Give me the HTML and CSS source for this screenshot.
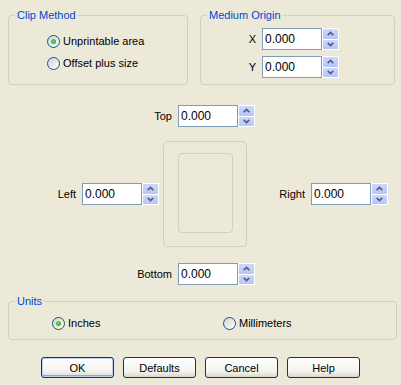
FILE: index.html
```html
<!DOCTYPE html>
<html lang="en">
<head>
    <meta charset="UTF-8">
    <title>Page Setup</title>
    <link rel="stylesheet" href="styles.css">
</head>
<body>
    <div class="dialog">
        <div class="top-row">
            <fieldset class="group clip">
                <legend>Clip Method</legend>
                <div class="group-body">
                    <label class="radio-row"><span class="radio checked"></span>Unprintable area</label>
                    <label class="radio-row"><span class="radio"></span>Offset plus size</label>
                </div>
            </fieldset>
            <fieldset class="group origin">
                <legend>Medium Origin</legend>
                <div class="group-body">
                    <div class="field">
                        <span class="field-label">X</span>
                        <input type="text" value="0.000">
                        <span class="spin">
                            <span class="spin-btn"><svg width="7" height="5" viewBox="0 0 7 5"><path d="M0.7 4.2 L3.5 1.4 L6.3 4.2"/></svg></span>
                            <span class="spin-btn"><svg width="7" height="5" viewBox="0 0 7 5"><path d="M0.7 0.8 L3.5 3.6 L6.3 0.8"/></svg></span>
                        </span>
                    </div>
                    <div class="field">
                        <span class="field-label">Y</span>
                        <input type="text" value="0.000">
                        <span class="spin">
                            <span class="spin-btn"><svg width="7" height="5" viewBox="0 0 7 5"><path d="M0.7 4.2 L3.5 1.4 L6.3 4.2"/></svg></span>
                            <span class="spin-btn"><svg width="7" height="5" viewBox="0 0 7 5"><path d="M0.7 0.8 L3.5 3.6 L6.3 0.8"/></svg></span>
                        </span>
                    </div>
                </div>
            </fieldset>
        </div>

        <div class="margins">
            <div class="field vrow">
                <span class="field-label">Top</span>
                <input type="text" value="0.000">
                <span class="spin">
                    <span class="spin-btn"><svg width="7" height="5" viewBox="0 0 7 5"><path d="M0.7 4.2 L3.5 1.4 L6.3 4.2"/></svg></span>
                    <span class="spin-btn"><svg width="7" height="5" viewBox="0 0 7 5"><path d="M0.7 0.8 L3.5 3.6 L6.3 0.8"/></svg></span>
                </span>
            </div>
            <div class="hrow">
                <div class="field side-left">
                    <span class="field-label">Left</span>
                    <input type="text" value="0.000">
                    <span class="spin">
                        <span class="spin-btn"><svg width="7" height="5" viewBox="0 0 7 5"><path d="M0.7 4.2 L3.5 1.4 L6.3 4.2"/></svg></span>
                        <span class="spin-btn"><svg width="7" height="5" viewBox="0 0 7 5"><path d="M0.7 0.8 L3.5 3.6 L6.3 0.8"/></svg></span>
                    </span>
                </div>
                <div class="page"><div class="sheet"></div></div>
                <div class="field side-right">
                    <span class="field-label">Right</span>
                    <input type="text" value="0.000">
                    <span class="spin">
                        <span class="spin-btn"><svg width="7" height="5" viewBox="0 0 7 5"><path d="M0.7 4.2 L3.5 1.4 L6.3 4.2"/></svg></span>
                        <span class="spin-btn"><svg width="7" height="5" viewBox="0 0 7 5"><path d="M0.7 0.8 L3.5 3.6 L6.3 0.8"/></svg></span>
                    </span>
                </div>
            </div>
            <div class="field vrow bottom">
                <span class="field-label">Bottom</span>
                <input type="text" value="0.000">
                <span class="spin">
                    <span class="spin-btn"><svg width="7" height="5" viewBox="0 0 7 5"><path d="M0.7 4.2 L3.5 1.4 L6.3 4.2"/></svg></span>
                    <span class="spin-btn"><svg width="7" height="5" viewBox="0 0 7 5"><path d="M0.7 0.8 L3.5 3.6 L6.3 0.8"/></svg></span>
                </span>
            </div>
        </div>

        <fieldset class="group units">
            <legend>Units</legend>
            <div class="group-body units-body">
                <label class="radio-row inches"><span class="radio checked"></span>Inches</label>
                <label class="radio-row"><span class="radio"></span>Millimeters</label>
            </div>
        </fieldset>

        <div class="buttons">
            <button class="default">OK</button>
            <button>Defaults</button>
            <button>Cancel</button>
            <button>Help</button>
        </div>
    </div>
</body>
</html>
```

FILE: styles.css
```css
body {
    margin: 0;
    background-color: #ece9d8;
    font-family: "Liberation Sans", Arial, sans-serif;
    font-size: 11px;
    color: #000;
}
.dialog {
    width: 401px;
    height: 385px;
    padding-top: 9px;
    box-sizing: border-box;
    overflow: hidden;
}
.top-row {
    display: flex;
    gap: 12px;
    padding-left: 8px;
}
.group {
    margin: 0;
    padding: 0;
    min-width: 0;
    border: 1px solid #d0d0bf;
    border-radius: 4px;
}
.group legend {
    color: #0046d5;
    font-size: 11px;
    line-height: 13px;
    padding: 0 2px;
    margin-left: 6px;
}
.clip {
    width: 180px;
    box-sizing: border-box;
}
.clip .group-body {
    padding: 8px 0 10px 38px;
}
.origin {
    width: 195px;
    box-sizing: border-box;
}
.origin .group-body {
    display: flex;
    flex-direction: column;
    gap: 6px;
    padding: 6px 0 6px 41px;
}
.origin .field-label {
    width: 14px;
    text-align: right;
    margin-right: 6px;
}
.radio-row {
    display: flex;
    align-items: center;
    height: 22px;
}
.radio {
    position: relative;
    width: 13px;
    height: 13px;
    box-sizing: border-box;
    border: 1px solid #1c5180;
    border-radius: 50%;
    background: linear-gradient(135deg, #d6d3c8, #ffffff);
    margin-right: 3px;
}
.radio.checked::after {
    content: "";
    position: absolute;
    left: 3px;
    top: 3px;
    width: 5px;
    height: 5px;
    border-radius: 50%;
    background: radial-gradient(circle at 40% 40%, #5fdc5b, #21a121);
}
.field {
    display: flex;
    align-items: center;
}
.field input {
    width: 60px;
    height: 22px;
    box-sizing: border-box;
    border: 1px solid #7f9db9;
    padding: 0 2px;
    margin: 0;
    font-family: "Liberation Sans", Arial, sans-serif;
    font-size: 12px;
    color: #000;
    background: #fff;
    outline: none;
}
.spin {
    display: flex;
    flex-direction: column;
    gap: 1px;
    width: 17px;
    height: 22px;
    box-sizing: border-box;
    padding: 1px;
    background: #fff;
}
.spin-btn {
    flex: 1;
    display: flex;
    align-items: center;
    justify-content: center;
    background: linear-gradient(#cdd8fb, #b6c5f6);
    border-radius: 1px;
}
.spin-btn svg path {
    fill: none;
    stroke: #4d6185;
    stroke-width: 1.7;
}
.margins {
    margin-top: 20px;
}
.vrow {
    padding-left: 132px;
}
.vrow .field-label {
    width: 40px;
    text-align: right;
    margin-right: 6px;
}
.hrow {
    display: flex;
    align-items: center;
    margin-top: 14px;
    padding-left: 40px;
}
.side-left .field-label {
    width: 36px;
    text-align: right;
    margin-right: 6px;
}
.side-right {
    margin-left: 28px;
}
.side-right .field-label {
    width: 30px;
    text-align: right;
    margin-right: 6px;
}
.page {
    width: 84px;
    height: 106px;
    box-sizing: border-box;
    border: 1px solid #d0d0bf;
    border-radius: 5px;
    margin-left: 4px;
    padding: 11px 0 0 14px;
}
.sheet {
    width: 55px;
    height: 80px;
    box-sizing: border-box;
    border: 1px solid #d0d0bf;
    border-radius: 4px;
}
.vrow.bottom {
    margin-top: 16px;
}
.units {
    width: 389px;
    box-sizing: border-box;
    margin: 10px 0 0 8px;
}
.units-body {
    display: flex;
    padding: 4px 0 5px 43px;
}
.inches {
    width: 171px;
}
.buttons {
    display: flex;
    justify-content: center;
    gap: 9px;
    margin-top: 17px;
}
.buttons button {
    width: 73px;
    height: 21px;
    padding: 0;
    border: 1px solid #003c74;
    border-radius: 3px;
    background: linear-gradient(#ffffff, #f3f3ef 70%, #dcd8cd);
    font-family: "Liberation Sans", Arial, sans-serif;
    font-size: 11px;
    color: #000;
}
.buttons button.default {
    box-shadow: inset 0 0 0 1px #bcd0f4, inset 0 -1px 0 1px #8aa8e6;
}
```
